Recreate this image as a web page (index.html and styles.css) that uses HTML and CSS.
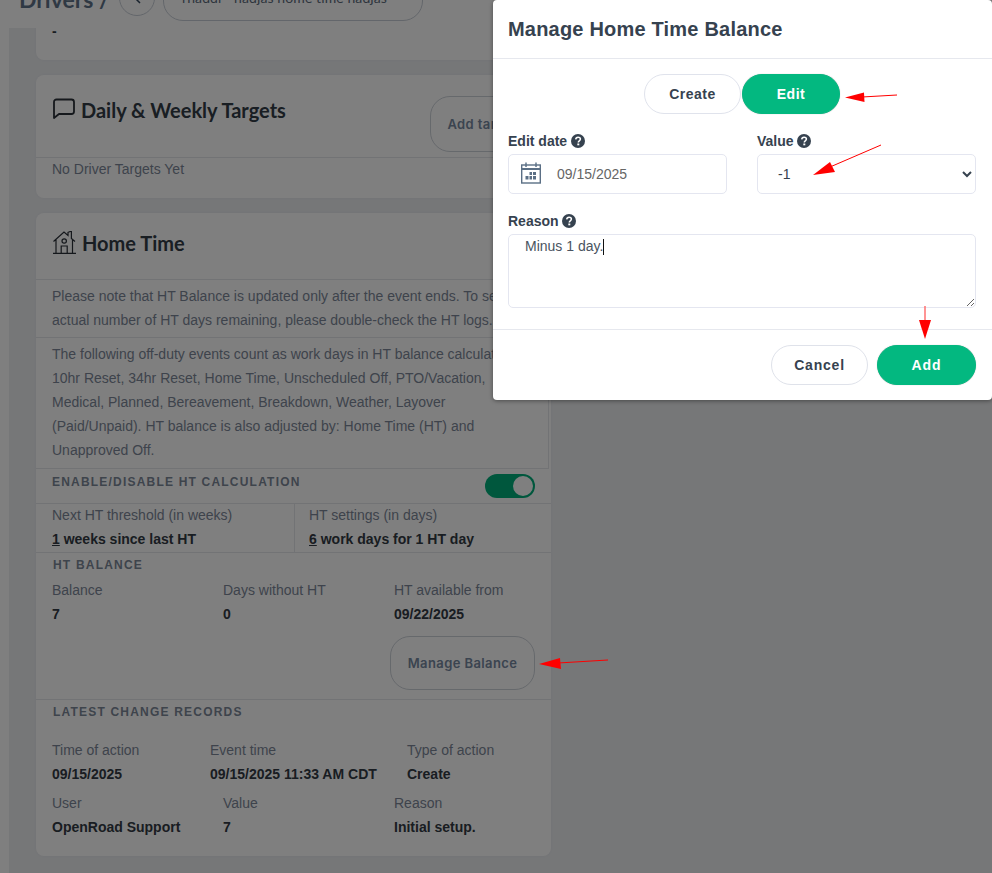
FILE: index.html
```html
<!DOCTYPE html>
<html lang="en">
<head>
<meta charset="UTF-8">
<meta name="viewport" content="width=device-width, initial-scale=1.0">
<title>Manage Home Time Balance</title>
<link rel="stylesheet" href="styles.css">
</head>
<body>

<header class="topbar">
  <h1 class="topbar-title">Drivers /</h1>
  <button class="back-btn" type="button" aria-label="Back">
    <svg width="10" height="14" viewBox="0 0 10 14"><path d="M8 1 2 7l6 6" fill="none" stroke="currentColor" stroke-width="1.5"/></svg>
  </button>
  <div class="driver-select">
    <span>rnaddr · nadjas home time nadjas</span>
    <svg width="10" height="6" viewBox="0 0 10 6"><path d="M0 0h10L5 6z" fill="currentColor"/></svg>
  </div>
</header>

<div class="layout">
  <div class="rail"></div>
  <main class="content">

    <section class="card card-top">
      <p class="value">-</p>
    </section>

    <section class="card">
      <div class="card-head targets-head">
        <svg class="head-icon" width="24" height="24" viewBox="1 -1 24 24"><path d="M3 21V5a2.500 2.500 0 0 1 2.500-2.500h15A2.500 2.500 0 0 1 23 5v9.500a2.500 2.500 0 0 1-2.500 2.500H8z" fill="none" stroke="currentColor" stroke-width="1.8" stroke-linejoin="round"/></svg>
        <h2 class="card-title">Daily &amp; Weekly Targets</h2>
        <button class="ghost-btn add-target" type="button">Add target</button>
      </div>
      <p class="no-targets">No Driver Targets Yet</p>
    </section>

    <section class="card card-home">
      <div class="card-head home-head">
        <svg class="head-icon" width="24" height="24" viewBox="0 1 24 24" fill="none" stroke="currentColor" stroke-width="1.2"><path d="M1 23.300h23M1.500 11.500 12 2l4 3.400V2.300l3.400-1.200v7.300l3.600 3.100M4 9.500v13.800M20.500 9.500v13.800M9.200 23V16h6v7"/><circle cx="12.200" cy="11" r="2.200"/></svg>
        <h2 class="card-title">Home Time</h2>
      </div>

      <div class="note">Please note that HT Balance is updated only after the event ends. To see the actual number of HT days remaining, please double-check the HT logs.</div>
      <div class="note note-list">The following off-duty events count as work days in HT balance calculation: 10hr Reset, 34hr Reset, Home Time, Unscheduled Off, PTO/Vacation, Medical, Planned, Bereavement, Breakdown, Weather, Layover (Paid/Unpaid). HT balance is also adjusted by: Home Time (HT) and Unapproved Off.</div>

      <div class="switch-row">
        <h3 class="caps">Enable/Disable HT calculation</h3>
        <span class="switch"><span class="switch-knob"></span></span>
      </div>

      <div class="settings">
        <div class="setting">
          <div class="label">Next HT threshold (in weeks)</div>
          <div class="value"><u>1</u> weeks since last HT</div>
        </div>
        <div class="setting">
          <div class="label">HT settings (in days)</div>
          <div class="value"><u>6</u> work days for 1 HT day</div>
        </div>
      </div>

      <div class="balance">
        <h3 class="caps balance-caps">HT Balance</h3>
        <div class="cols">
          <div><div class="label">Balance</div><div class="value">7</div></div>
          <div><div class="label">Days without HT</div><div class="value">0</div></div>
          <div><div class="label">HT available from</div><div class="value">09/22/2025</div></div>
        </div>
        <div class="balance-actions">
          <button class="ghost-btn manage-btn" type="button">Manage Balance</button>
        </div>
      </div>

      <div class="records">
        <h3 class="caps balance-caps">Latest change records</h3>
        <div class="records-top">
          <div><div class="label">Time of action</div><div class="value">09/15/2025</div></div>
          <div><div class="label">Event time</div><div class="value">09/15/2025 11:33 AM CDT</div></div>
          <div><div class="label">Type of action</div><div class="value">Create</div></div>
        </div>
        <div class="cols records-bottom">
          <div><div class="label">User</div><div class="value">OpenRoad Support</div></div>
          <div><div class="label">Value</div><div class="value">7</div></div>
          <div><div class="label">Reason</div><div class="value">Initial setup.</div></div>
        </div>
      </div>
    </section>
  </main>
</div>

<div class="backdrop"></div>

<div class="modal">
  <div class="modal-head">
    <h2 class="modal-title">Manage Home Time Balance</h2>
  </div>
  <div class="modal-body">
    <div class="mode-toggle">
      <button class="pill" type="button">Create</button>
      <button class="pill pill-green pill-edit" type="button">Edit</button>
    </div>

    <div class="field-row">
      <div class="field">
        <label class="field-label">Edit date <svg class="help" width="14" height="14" viewBox="0 0 14 14"><circle cx="7" cy="7" r="7" fill="currentColor"/><path d="M4.700 5.400C4.800 4 5.800 3.200 7.100 3.200c1.400 0 2.300.8 2.300 1.900 0 1.800-2.100 1.700-2.100 3.300" fill="none" stroke="#fff" stroke-width="1.500"/><rect x="6.300" y="9.500" width="2" height="1.800" fill="#fff"/></svg></label>
        <div class="date-input">
          <svg width="20" height="22" viewBox="0 0 20 22" fill="none" stroke="#5b6f85" stroke-width="1.400"><rect x=".7" y="3" width="18.600" height="18"/><path d="M5 .5v4.500M15 .5v4.500"/><path d="M.7 7h18.600" stroke-width="2"/><path d="M8.500 10h2.500v3H8.500zM12 10h3v3h-3zM4.500 14h3v3.500h-3zM8.500 14h2.500v3.500H8.500zM12 14h3v3.500h-3z" fill="#5b6f85" stroke="none"/></svg>
          <span>09/15/2025</span>
        </div>
      </div>
      <div class="field">
        <label class="field-label" for="valueSel">Value <svg class="help" width="14" height="14" viewBox="0 0 14 14"><circle cx="7" cy="7" r="7" fill="currentColor"/><path d="M4.700 5.400C4.800 4 5.800 3.200 7.100 3.200c1.400 0 2.300.8 2.300 1.900 0 1.800-2.100 1.700-2.100 3.300" fill="none" stroke="#fff" stroke-width="1.500"/><rect x="6.300" y="9.500" width="2" height="1.800" fill="#fff"/></svg></label>
        <select class="value-select" id="valueSel">
          <option>-1</option>
          <option>1</option>
        </select>
      </div>
    </div>

    <div class="field field-reason">
      <label class="field-label">Reason <svg class="help" width="14" height="14" viewBox="0 0 14 14"><circle cx="7" cy="7" r="7" fill="currentColor"/><path d="M4.700 5.400C4.800 4 5.800 3.200 7.100 3.200c1.400 0 2.300.8 2.300 1.900 0 1.800-2.100 1.700-2.100 3.300" fill="none" stroke="#fff" stroke-width="1.500"/><rect x="6.300" y="9.500" width="2" height="1.800" fill="#fff"/></svg></label>
      <div class="reason-box">Minus 1 day.<span class="caret"></span></div>
    </div>
  </div>
  <div class="modal-foot">
    <button class="pill pill-cancel" type="button">Cancel</button>
    <button class="pill pill-green pill-add" type="button">Add</button>
  </div>
</div>

<!-- red annotation arrows drawn on top of the screenshot -->
<svg class="arrows" width="992" height="873" viewBox="0 0 992 873">
  <g fill="#ff0000" stroke="none">
    <path d="M845 97.500 864 92.500 864.500 102z"/>
    <path d="M813 175 830 162 835 172z"/>
    <path d="M925 339 919 320 931 320z"/>
    <path d="M539 664 560 658 561 669z"/>
  </g>
  <g stroke="#ff0000" stroke-width="1" fill="none">
    <path d="M862 97 897 95"/>
    <path d="M830 167 881 145"/>
    <path d="M925 320V306" stroke="#ff7070" stroke-width="1.500"/>
    <path d="M558 663 608 660"/>
  </g>
</svg>

</body>
</html>
```

FILE: styles.css
```css
* {
  box-sizing: border-box;
}

html, body {
  height: 100%;
}

body {
  margin: 0;
  height: 873px;
  overflow: hidden;
  background: #fff;
  color: #2f3a48;
  font-family: 'Liberation Sans', Arial, sans-serif;
  font-size: 14px;
  position: relative;
}

h1, h2, h3, p {
  margin: 0;
}

button {
  font: inherit;
  cursor: pointer;
}

/* top bar, scrolled so only the bottom shows */
.topbar {
  height: 28px;
  display: flex;
  align-items: flex-end;
  padding: 0 0 7px 19px;
  overflow: hidden;
}

.topbar-title {
  font-family: Lato, sans-serif;
  font-size: 23px;
  font-weight: 700;
  line-height: 30px;
  color: #5f7388;
  margin-right: 13px;
  margin-bottom: 7px;
  white-space: nowrap;
  width: 87px;
  flex: none;
}

.back-btn {
  width: 36px;
  height: 36px;
  flex: none;
  border: 1px solid #c7cdd6;
  border-radius: 50%;
  background: #fff;
  color: #33475b;
  margin-right: 8px;
  margin-bottom: 5px;
  padding: 0;
}

.driver-select {
  width: 260px;
  height: 48px;
  flex: none;
  border: 1px solid #c7cdd6;
  border-radius: 20px;
  display: flex;
  align-items: center;
  justify-content: space-between;
  padding: 0 13px 0 18px;
  color: #5b6a7b;
  font-family: Lato, sans-serif;
  font-size: 14px;
  letter-spacing: 0.1px;
  white-space: nowrap;
}

.layout {
  display: flex;
  height: 845px;
}

.rail {
  width: 9px;
  flex: none;
}

.content {
  flex: 1;
  background: #eceef1;
  padding: 0 441px 17px 27px;
  display: flex;
  flex-direction: column;
  justify-content: flex-end;
  gap: 15px;
  overflow: hidden;
}

.card {
  background: #fff;
  border-radius: 8px;
  box-shadow: 0 0 3px rgba(0, 0, 0, 0.04);
  flex: none;
}

.card-top {
  height: 60px;
  padding: 19px 16px 0;
  border-radius: 0 0 8px 8px;
}

.card-head {
  display: flex;
  padding: 0 16px;
  border-bottom: 1px solid #e4e6ea;
}

.targets-head {
  height: 83px;
  align-items: flex-start;
  justify-content: flex-start;
  padding-top: 21px;
}

.home-head {
  height: 67px;
  align-items: center;
  padding-bottom: 6px;
}

.head-icon {
  color: #2a3038;
  flex: none;
}

.card-title {
  font-family: Lato, sans-serif;
  font-size: 20px;
  font-weight: 700;
  line-height: 28px;
  color: #333c47;
  margin-left: 5px;
  white-space: nowrap;
}

.home-head .card-title {
  margin-left: 6px;
}

.ghost-btn {
  height: 54px;
  border: 1px solid #cdd2d9;
  border-radius: 20px;
  background: #fff;
  color: #7688a0;
  font-family: Inter, sans-serif;
  font-size: 13px;
  font-weight: 600;
  letter-spacing: 0.4px;
  padding: 0 16px;
  white-space: nowrap;
}

.add-target {
  height: 56px;
  width: 105px;
  margin-left: auto;
}

.manage-btn {
  width: 145px;
  padding: 0;
}

.no-targets {
  height: 40px;
  padding: 2px 16px 0;
  line-height: 18px;
  color: #7c8798;
}

.label {
  color: #7c8798;
  line-height: 24px;
  white-space: nowrap;
}

.value {
  color: #333a44;
  font-weight: 700;
  line-height: 24px;
  white-space: nowrap;
}

.note {
  padding: 4px 16px 5px;
  border-bottom: 1px solid #e4e6ea;
  line-height: 24px;
  color: #7c8798;
}

.note-list {
  padding-bottom: 6px;
  border-right: 1px solid #e4e6ea;
  margin-right: 2px;
  padding-right: 14px;
}

.switch-row {
  height: 35px;
  display: flex;
  justify-content: space-between;
  padding: 4px 16px 0;
  border-bottom: 1px solid #e4e6ea;
}

.caps {
  font-size: 12px;
  font-weight: 700;
  line-height: 18px;
  letter-spacing: 1.2px;
  text-transform: uppercase;
  color: #7c8898;
}

.switch {
  width: 50px;
  height: 24px;
  margin-top: 1px;
  border-radius: 12px;
  background: #00ae7a;
  display: flex;
  justify-content: flex-end;
  align-items: center;
  padding-right: 2px;
}

.switch-knob {
  width: 20px;
  height: 20px;
  border-radius: 50%;
  background: #fff;
}

.settings {
  display: grid;
  grid-template-columns: 258px 1fr;
  border-bottom: 1px solid #e4e6ea;
  height: 49px;
}

.setting {
  padding-left: 16px;
}

.setting .label {
  line-height: 22px;
}

.setting .value {
  margin-top: 1px;
}

.setting + .setting {
  border-left: 1px solid #e4e6ea;
  padding-left: 14px;
}

.balance {
  height: 147px;
  padding: 3px 16px 0;
  border-bottom: 1px solid #e4e6ea;
}

.balance-caps {
  padding-left: 1px;
}

.cols {
  display: grid;
  grid-template-columns: 171px 171px 1fr;
}

.balance .cols {
  margin-top: 4px;
}

.balance-actions {
  display: flex;
  justify-content: flex-end;
  margin-top: 10px;
}

.records {
  padding: 3px 16px 17px;
}

.records-top {
  display: flex;
  margin-top: 17px;
}

.records-top > div:first-child {
  width: 158px;
}

.records-top > div:nth-child(2) {
  width: 197px;
}

.records-bottom {
  margin-top: 5px;
}

/* modal */
.backdrop {
  position: absolute;
  inset: 0;
  background: rgba(0, 0, 0, 0.5);
}

.modal {
  position: absolute;
  top: 0;
  left: 493px;
  width: 499px;
  height: 400px;
  background: #fff;
  border-radius: 4px;
  box-shadow: 0 1px 4px rgba(0, 0, 0, 0.4);
}

.modal-head {
  height: 59px;
  padding: 15px 15px 0;
  border-bottom: 1px solid #e6e8ee;
}

.modal-title {
  font-size: 20px;
  font-weight: 700;
  line-height: 28px;
  letter-spacing: 0.2px;
  color: #36424f;
}

.modal-body {
  height: 271px;
  padding: 15px 16px 0 15px;
  border-bottom: 1px solid #e6e8ee;
}

.mode-toggle {
  display: flex;
  justify-content: center;
  gap: 1px;
}

.pill {
  width: 97px;
  height: 40px;
  border: 1px solid #e0e3ec;
  border-radius: 20px;
  background: #fff;
  color: #36424f;
  font-weight: 700;
  font-size: 14px;
  letter-spacing: 0.5px;
  padding: 0;
}

.pill-green {
  background: #03b880;
  border-color: #03b880;
  color: #fff;
  box-shadow: 0 0 1px rgba(0, 0, 0, 0.3);
}

.pill-edit {
  width: 98px;
}

.field-row {
  display: flex;
  gap: 30px;
  margin-top: 18px;
}

.field {
  flex: 1;
}

.field-label {
  display: block;
  height: 22px;
  line-height: 18px;
  font-weight: 700;
  color: #36424f;
}

.help {
  vertical-align: -2px;
}

.date-input {
  height: 40px;
  border: 1px solid #e4e6f0;
  border-radius: 5px;
  display: flex;
  align-items: center;
  gap: 16px;
  padding-left: 12px;
  color: #666;
}

.date-input svg {
  margin-top: -3px;
}

.value-select {
  display: block;
  width: 100%;
  height: 40px;
  border: 1px solid #e4e6f0;
  border-radius: 5px;
  background: #fff;
  color: #36424f;
  font-family: inherit;
  font-size: 14px;
  padding-left: 16px;
}

.field-reason {
  margin-top: 18px;
}

.reason-box {
  height: 74px;
  border: 1px solid #e4e6f0;
  border-radius: 5px;
  padding: 1px 16px;
  line-height: 20px;
  color: #4a5461;
  resize: vertical;
  overflow: auto;
}

.caret {
  display: inline-block;
  width: 1px;
  height: 16px;
  background: #111;
  vertical-align: -4px;
}

.modal-foot {
  display: flex;
  justify-content: flex-end;
  gap: 9px;
  padding: 15px 16px 0 15px;
}

.pill-cancel {
  letter-spacing: 0.8px;
  border-color: #dfe2ea;
}

.pill-add {
  width: 99px;
  letter-spacing: 1px;
}

.arrows {
  position: absolute;
  top: 0;
  left: 0;
  pointer-events: none;
}
```
